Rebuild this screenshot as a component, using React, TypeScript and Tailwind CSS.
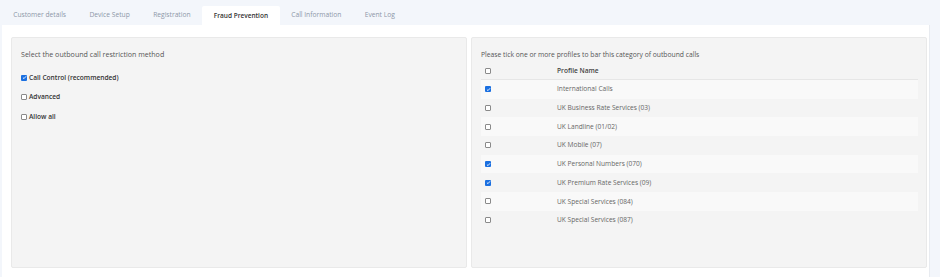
import React from 'react';

const tabs = ['Customer details', 'Device Setup', 'Registration', 'Fraud Prevention', 'Call Information', 'Event Log'];

const profiles: { name: string; checked: boolean }[] = [
  { name: 'International Calls', checked: true },
  { name: 'UK Business Rate Services (03)', checked: false },
  { name: 'UK Landline (01/02)', checked: false },
  { name: 'UK Mobile (07)', checked: false },
  { name: 'UK Personal Numbers (070)', checked: true },
  { name: 'UK Premium Rate Services (09)', checked: true },
  { name: 'UK Special Services (084)', checked: false },
  { name: 'UK Special Services (087)', checked: false },
];

function Box({ checked }: { checked: boolean }) {
  if (checked) {
    return (
      <span className="flex h-[6px] w-[6px] shrink-0 items-center justify-center rounded-[1px] bg-[#1a6fe0]">
        <svg viewBox="0 0 8 8" className="h-[5px] w-[5px]">
          <path d="M1.5 4.2 L3.2 5.8 L6.5 2" fill="none" stroke="#fff" strokeWidth="1.4" />
        </svg>
      </span>
    );
  }
  return <span className="h-[6px] w-[6px] shrink-0 rounded-[1px] border-[0.8px] border-[#8a8a8a] bg-white" />;
}

export default function App() {
  return (
    <div className="h-[277px] w-[940px] overflow-hidden bg-[#f3f6fb] font-['Open_Sans',sans-serif]">
      <div className="flex h-[25px] items-end pl-[1.5px]">
        {tabs.map((t) => {
          const active = t === 'Fraud Prevention';
          return (
            <div
              key={t}
              className={
                active
                  ? 'flex h-[19px] items-center rounded-t-[2px] bg-white px-[11.5px] text-[6.5px] font-semibold text-[#333]'
                  : 'flex h-[19px] items-center px-[11.7px] text-[6.7px] text-[#8d96a8]'
              }
            >
              {t}
            </div>
          );
        })}
      </div>
      <div className="ml-[2px] flex h-[252px] w-[928px] gap-[4px] border-r border-[#e8ebf0] bg-white pl-[9px] pr-[2px] pt-[12px]">
        <div className="h-[231px] w-[456px] rounded-[2px] border border-[#e9e9e9] bg-[#f4f4f4] px-[9px] pt-[12px] text-[#555]">
          <div className="text-[7.1px] leading-[9px]">Select the outbound call restriction method</div>
          <div className="mt-[14px] flex flex-col gap-[9.5px] text-[6.6px] font-semibold text-[#333]">
            <div className="flex items-center gap-[2px]">
              <Box checked />
              <span>Call Control (recommended)</span>
            </div>
            <div className="flex items-center gap-[2px]">
              <Box checked={false} />
              <span>Advanced</span>
            </div>
            <div className="flex items-center gap-[2px]">
              <Box checked={false} />
              <span>Allow all</span>
            </div>
          </div>
        </div>
        <div className="h-[231px] w-[456px] rounded-[2px] border border-[#e9e9e9] bg-[#f4f4f4] px-[9px] pt-[12px] text-[#555]">
          <div className="text-[6.75px] leading-[9px]">Please tick one or more profiles to bar this category of outbound calls</div>
          <div className="mt-[3px] w-[437px]">
            <div className="flex h-[18px] items-center border-b border-[#e6e6e6] text-[6.6px] font-semibold text-[#444]">
              <div className="flex w-[76px] pl-[4px]">
                <Box checked={false} />
              </div>
              <span>Profile Name</span>
            </div>
            {profiles.map((p, i) => (
              <div
                key={p.name}
                className={
                  'flex h-[18.7px] items-center text-[6.6px] text-[#666] ' + (i % 2 === 0 ? 'bg-[#f9f9f9]' : '')
                }
              >
                <div className="flex w-[76px] pl-[4px]">
                  <Box checked={p.checked} />
                </div>
                <span>{p.name}</span>
              </div>
            ))}
          </div>
        </div>
      </div>
    </div>
  );
}
